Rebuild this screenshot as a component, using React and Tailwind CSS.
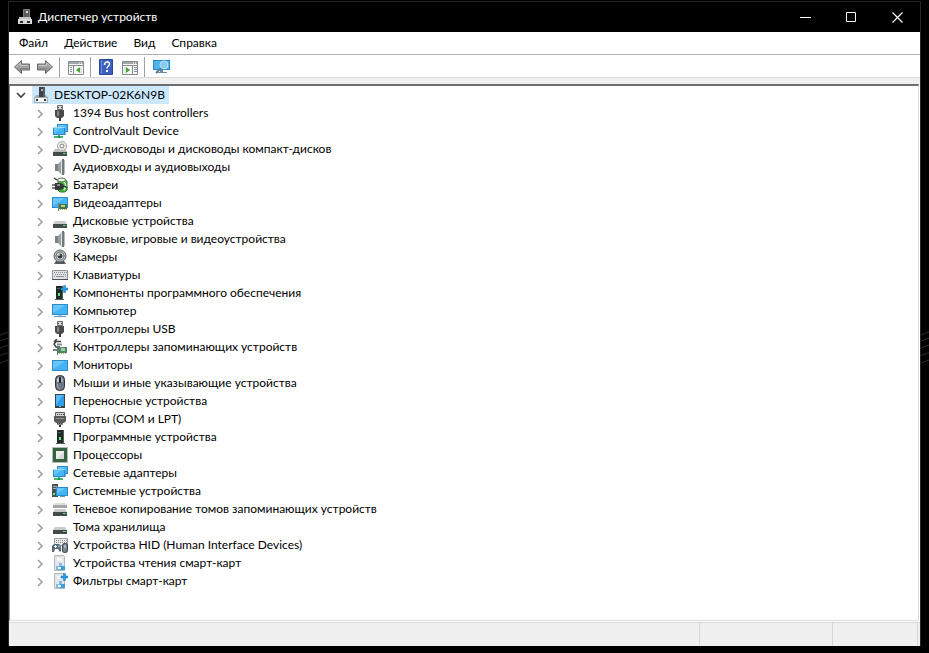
import React, { useState } from "react";

const Icon = ({ children, className = "" }) => (
  <svg
    viewBox="0 0 16 16"
    className={`h-4 w-4 shrink-0 ${className}`}
    aria-hidden="true"
  >
    {children}
  </svg>
);

// Общие части значков
const Screen = ({ x, y, w, h }) => (
  <>
    <rect x={x} y={y} width={w} height={h} fill="#2a8bd0" />
    <rect x={x + 1} y={y + 1} width={w - 2} height={h - 2} fill="#45b4f4" />
    <path d={`M${x + 1} ${y + h - 2}V${y + 1}H${x + w - 3}Z`} fill="#67c6fa" />
  </>
);

const Drive = ({ y = 8 }) => (
  <>
    <path d={`M3 ${y}H13L15 ${y + 3}H1Z`} fill="#c9cbcb" />
    <rect x="1" y={y + 3} width="14" height="4" fill="#45494a" />
    <rect x="11" y={y + 4} width="3" height="1" fill="#4fe36a" />
  </>
);

const Plus = () => (
  <path
    d="M11.5 0.5h2V3H16v2h-2.5v2.5h-2V5H9V3h2.5Z"
    fill="#2b9be6"
    stroke="#1472b0"
    strokeWidth="0.5"
  />
);

const ComputerTree = () => (
  <Icon>
    <path d="M6 0h6v10H6Z" fill="#3b4248" />
    <path d="M10 0h2v10h-2Z" fill="#535c63" />
    <path d="M8 2h2v2H8Z" fill="#aab2b8" />
    <path d="M3 8h3v2h6V8h1l2 3H1Z" fill="#a9aeb1" />
    <path d="M1.5 10.5h13v5h-13Z" fill="#f2f4f5" stroke="#a3a8ab" />
    <path d="M3 12h2v2H3ZM11 12h2v2h-2Z" fill="#30363a" />
  </Icon>
);

const TitleIcon = () => (
  <Icon>
    <path d="M6.5 0.5h6v8h-6Z" fill="#5c5c5c" stroke="#7e7e7e" />
    <path d="M9 2h2v2H9Z" fill="#dedede" />
    <path d="M2 8h12v7H2Z" fill="#c4c4c4" />
    <path d="M1 10h14v5H1Z" fill="#dadada" />
    <path d="M3 12h3v2H3ZM10 12h3v2h-3Z" fill="#2c2c2c" />
  </Icon>
);

const UsbIcon = () => (
  <Icon>
    <path d="M5.5 0.5h5v4h-5Z" fill="#dcdcdc" stroke="#666" />
    <path d="M6 2h1v1H6ZM9 2h1v1H9Z" fill="#444" />
    <path d="M3 5h9v6l-2 2H5l-2-2Z" fill="#4b4b4b" />
    <path d="M5 6h2v5H5Z" fill="#858585" />
    <path d="M7 13h2v3H7Z" fill="#3a3a3a" />
  </Icon>
);

const NetworkIcon = () => (
  <Icon>
    <Screen x={5} y={1} w={11} h={8} />
    <path d="M12 9h2v3h-2Z" fill="#7fb2d4" />
    <Screen x={1} y={4} w={12} h={8} />
    <path d="M1 4h12v1H1Z" fill="#9bd8fb" />
    <path d="M6 12h2v1h3v2H2v-2h4Z" fill="#43b476" />
    <path d="M6 13h2v2H6Z" fill="#2a8a50" />
  </Icon>
);

const DvdIcon = () => (
  <Icon>
    <circle cx="10" cy="5" r="4.5" fill="#ececec" stroke="#a6a6a6" />
    <circle cx="10" cy="5" r="2" fill="#d2d2d2" stroke="#8b8b8b" />
    <circle cx="10" cy="5" r="1" fill="#fff" />
    <path d="M3 8h3l2 1.5h4L13 8l2 3H1Z" fill="#b9bbbb" />
    <path d="M1 11h14v4H1Z" fill="#45494a" />
    <path d="M11 12h3v1h-3Z" fill="#4fe36a" />
  </Icon>
);

const SpeakerIcon = () => (
  <Icon>
    <path d="M3 5h3v7H3Z" fill="#7b8185" />
    <path d="M6 5l4-4v15l-4-4Z" fill="#9ba0a3" />
    <path d="M9 2l1-1v15l-1-1Z" fill="#e2e4e5" />
    <path d="M10 0h2v16h-2Z" fill="#74797c" />
    <path d="M12 1h1v14h-1Z" fill="#b7bbbd" />
  </Icon>
);

const BatteryIcon = () => (
  <Icon>
    <path d="M6 3h8l1 2v8l-2 2H8l-2-2Z" fill="#45b53e" stroke="#2a7a2c" />
    <ellipse cx="9.5" cy="3" rx="4" ry="2" fill="#e9f5e5" stroke="#4e6a4c" />
    <path d="M2 1l3 2" stroke="#35393b" strokeWidth="1.5" />
    <path d="M12 5c2 2 2 5 0 8" stroke="#c8f2bd" strokeWidth="1.5" fill="none" />
    <path d="M3 6h4c3 0 5 1.500 5 3.500S10 13 7 13H3Z" fill="#33383a" />
    <path d="M0 8h3M0 11h3" stroke="#4b5052" strokeWidth="1.5" />
    <path d="M5 8h3" stroke="#e4e7e7" />
    <path d="M11 9c2 0 3 1 4.5 2" fill="none" stroke="#33383a" strokeWidth="1.5" />
  </Icon>
);

const DisplayAdapterIcon = () => (
  <Icon>
    <Screen x={0} y={2} w={16} h={11} />
    <path d="M7 9h8v5H7Z" fill="#3d7a50" />
    <path d="M9 10h4v2H9Z" fill="#d7c865" />
    <path d="M8 14.5h7" stroke="#c9a93d" strokeDasharray="1 1" />
    <path d="M6.5 8v8" stroke="#77827c" />
  </Icon>
);

const DiskIcon = () => (
  <Icon>
    <Drive />
  </Icon>
);

const CameraIcon = () => (
  <Icon>
    <path d="M4 12h8l2 3H2Z" fill="#55595c" />
    <circle cx="8" cy="7" r="6" fill="#b4b8ba" stroke="#5d6163" />
    <circle cx="8" cy="7" r="4" fill="#eceeee" stroke="#75797b" />
    <circle cx="8" cy="7" r="2.5" fill="#33383b" />
    <circle cx="7" cy="6" r="1" fill="#d3dde2" />
  </Icon>
);

const KeyboardIcon = () => (
  <Icon>
    <path d="M0.5 3.5h15v9H0.5Z" fill="#dfe2e3" stroke="#8f9497" />
    <path d="M2 5.5h13M3 7.5h11" stroke="#8b9093" strokeDasharray="1 1" />
    <path d="M2 9.5h1M4 9.5h8M13 9.5h1" stroke="#8b9093" />
    <path d="M0 12.5h16" stroke="#4f5355" />
  </Icon>
);

const Tower = ({ x }) => (
  <>
    <path d={`M${x} 1h7v13h-7Z`} fill="#202a27" />
    <path d={`M${x + 6} 1h1v13h-1Z`} fill="#4d5d57" />
    <path d={`M${x + 2} 8h2v3h-2Z`} fill="#62e878" />
    <path d={`M${x + 1} 3h3v1h-3Z`} fill="#52605b" />
    <path d={`M${x - 1} 14h9v1h-9Z`} fill="#566059" />
  </>
);

const SoftwareComponentIcon = () => (
  <Icon>
    <Tower x={4} />
    <Plus />
  </Icon>
);

const SoftwareDeviceIcon = () => (
  <Icon>
    <Tower x={5} />
  </Icon>
);

const ComputerIcon = () => (
  <Icon>
    <Screen x={0} y={1} w={16} h={11} />
    <path d="M6 12h4v1H6Z" fill="#b4c5d0" />
    <path d="M2 13h12v1H2Z" fill="#5b9cc6" />
  </Icon>
);

const MonitorIcon = () => (
  <Icon>
    <Screen x={0} y={3} w={16} h={11} />
  </Icon>
);

const StorageControllerIcon = () => (
  <Icon>
    <path
      d="M9 2.5H4L2 5l2 3h4M5 0L2 3"
      fill="none"
      stroke="#3c4244"
      strokeWidth="1.5"
    />
    <path d="M5 5.5h5" stroke="#8a9194" strokeWidth="2" />
    <path d="M6 8h9v6H6Z" fill="#4c8860" />
    <path d="M9 9h4v3H9Z" fill="#a9c8ae" />
    <path d="M5.5 7v9" stroke="#656b6d" />
    <path d="M7 14.5h7" stroke="#c4ac52" strokeDasharray="1 1" />
    <path d="M1 10h4v2H1Z" fill="#7b8285" />
  </Icon>
);

const MouseIcon = () => (
  <Icon>
    <rect x="3.5" y="0.5" width="9" height="15" rx="4" fill="#6d7783" stroke="#2f353b" />
    <path d="M5 7V4l2-2v5Z" fill="#c3cad1" />
    <path d="M11 7V4L9 2v5Z" fill="#a3adb8" />
    <rect x="7" y="2" width="2" height="6" rx="1" fill="#1b1f23" />
    <path d="M5.5 9c0 3 1 4 2.5 5" fill="none" stroke="#9faab4" />
  </Icon>
);

const PortableIcon = () => (
  <Icon>
    <path d="M3 1h10v14H3Z" fill="#3a4249" />
    <path d="M4 2h8v11H4Z" fill="#2d9ee8" />
    <path d="M4 12V2h7Z" fill="#58bbf8" />
    <path d="M7 13h2v1H7Z" fill="#a8b0b6" />
  </Icon>
);

const PortIcon = () => (
  <Icon>
    <path d="M3.5 1.5h9v4h-9Z" fill="#d4d4d4" stroke="#5c5c5c" />
    <path d="M5 3.5h7" stroke="#444" strokeDasharray="1 1" />
    <path d="M2 5h12v5l-2 2H4l-2-2Z" fill="#5a5a5a" />
    <path d="M4 7h8v1H4Z" fill="#929292" />
    <path d="M5 12h6v2H5Z" fill="#8a8a8a" />
    <path d="M5 12.5h6" stroke="#3a3a3a" strokeDasharray="1 1" />
    <path d="M7 14h2v2H7Z" fill="#333" />
  </Icon>
);

const CpuIcon = () => (
  <Icon>
    <path d="M0.5 0.5h15v15H0.5Z" fill="none" stroke="#5c7a5f" strokeDasharray="1 1" />
    <path d="M1 1h14v14H1Z" fill="#3a6043" />
    <path d="M4 4h8v8H4Z" fill="#eceee9" />
    <path d="M12 5v7H5Z" fill="#d6dad3" />
  </Icon>
);

const SystemIcon = () => (
  <Icon>
    <path d="M0 1h6v13H0Z" fill="#4a5357" />
    <path d="M1 3h4v1H1ZM1 5h4v1H1Z" fill="#a6b0b5" />
    <path d="M1 10h2v2H1Z" fill="#62e878" />
    <Screen x={4} y={4} w={12} h={9} />
    <path d="M8 13h5v1H8Z" fill="#6d99b4" />
  </Icon>
);

const ShadowCopyIcon = () => (
  <Icon>
    <path d="M3 2h10l2 2H1Z" fill="#dcdddd" />
    <path d="M1 4h14v3H1Z" fill="#a4a7a8" />
    <Drive />
  </Icon>
);

const HidIcon = () => (
  <Icon>
    <path d="M2.5 1.5h13v7h-13Z" fill="#eceeef" stroke="#9a9ea0" />
    <path d="M4 3.5h11M4 5.5h11" stroke="#7c8183" strokeDasharray="1 1" />
    <path d="M2 7h5l2 2v5l-1 1-2-3H3l-1 3H0V9Z" fill="#5a6871" />
    <path d="M2 9.5h3M3.5 8v3" stroke="#fff" />
    <circle cx="7" cy="9.5" r="1" fill="#73c8f0" />
    <rect x="10.5" y="6.5" width="5" height="9" rx="2" fill="#78838b" stroke="#394148" />
    <path d="M13 8v3" stroke="#e5e9ec" />
  </Icon>
);

const Card = () => (
  <>
    <path d="M2.5 0.5h9l1 1v14h-10Z" fill="#e3e7ea" stroke="#b1b7bb" />
    <path d="M5 3h5v3H5Z" fill="#f8f9f9" />
    <path d="M7 8h3v3H7Z" fill="#7fbfe6" />
    <path d="M4 11h4v4H4Z" fill="#7fbfe6" />
    <path d="M8 11h5v4H8Z" fill="#3d9edc" />
    <path d="M6 12h3v2H6Z" fill="#fff" />
  </>
);

const SmartCardReaderIcon = () => (
  <Icon>
    <Card />
  </Icon>
);

const SmartCardFilterIcon = () => (
  <Icon>
    <Card />
    <Plus />
  </Icon>
);

// Значки панели инструментов
const ArrowIcon = ({ flip }) => (
  <Icon className={flip ? "-scale-x-100" : ""}>
    <path d="M0.5 8l7-6.5V5h8v6h-8v3.5Z" fill="#a0a0a0" stroke="#686868" />
    <path d="M2 8l4.5-4v2.5H14" fill="none" stroke="#c6c6c6" />
    <path d="M3 9l3.5 3V9.5H14" fill="none" stroke="#858585" />
  </Icon>
);

const PaneIcon = ({ right }) => (
  <Icon>
    <path d="M0.5 2.5h15v13H0.5Z" fill="#f7f7f7" stroke="#858b90" />
    <path d="M1 4h14" stroke="#a0a7ad" strokeWidth="2" />
    <path d="M11 4h1M13 4h1" stroke="#fff" />
    <path d="M1 6.5h14" stroke="#858b90" />
    {right ? (
      <>
        <path d="M10.5 7v8" stroke="#858b90" />
        <path d="M12 8.5h3M12 10.5h3M12 12.5h3" stroke="#7f91a0" />
        <path d="M2 8h2v6H2Z" fill="#e0e5df" />
        <path d="M4 8v6l4-3Z" fill="#42a12f" />
      </>
    ) : (
      <>
        <path d="M5.5 7v8" stroke="#858b90" />
        <path d="M2 8.5h2M2 10.5h2M2 12.5h2" stroke="#7f91a0" />
        <path d="M12 8h2v6h-2Z" fill="#e0e5df" />
        <path d="M12 8v6l-4-3Z" fill="#42a12f" />
      </>
    )}
  </Icon>
);

const HelpIcon = () => (
  <Icon>
    <path d="M1.5 0.5h13v15h-13Z" fill="#3c5fc0" stroke="#2b479c" />
    <path d="M3.5 1v14" stroke="#6d8cdd" />
    <path
      d="M6.5 6c0-4 5-4 5-1 0 2-2.5 2-2.5 4.5"
      fill="none"
      stroke="#fff"
      strokeWidth="1.5"
    />
    <path d="M8 11h2v2H8Z" fill="#fff" />
  </Icon>
);

const ScanIcon = () => (
  <svg viewBox="0 0 17 16" className="h-4 w-[17px] shrink-0" aria-hidden="true">
    <path d="M0 1h17v10H0Z" fill="#2589c8" />
    <path d="M1 2h15v8H1Z" fill="#4db5ec" />
    <path d="M7 11h3v2h4v1H4v-1h3Z" fill="#718b9b" />
    <circle cx="11" cy="6" r="4" fill="#86cbf0" stroke="#bfe2f5" />
    <path d="M8 9l-5 5" stroke="#557c96" strokeWidth="2" />
  </svg>
);

const Chevron = ({ open, dark }) => (
  <svg
    viewBox="0 0 10 10"
    className={`h-[10px] w-[10px] ${dark ? "stroke-[#404040]" : "stroke-[#a0a0a0]"}`}
    fill="none"
    strokeWidth="1.6"
    aria-hidden="true"
  >
    <path d={open ? "M1 3l4 4 4-4" : "M3 1l4 4-4 4"} />
  </svg>
);

const menuItems = ["Файл", "Действие", "Вид", "Справка"];

const devices = [
  { name: "1394 Bus host controllers", icon: UsbIcon },
  { name: "ControlVault Device", icon: NetworkIcon },
  { name: "DVD-дисководы и дисководы компакт-дисков", icon: DvdIcon },
  { name: "Аудиовходы и аудиовыходы", icon: SpeakerIcon },
  { name: "Батареи", icon: BatteryIcon },
  { name: "Видеоадаптеры", icon: DisplayAdapterIcon },
  { name: "Дисковые устройства", icon: DiskIcon },
  { name: "Звуковые, игровые и видеоустройства", icon: SpeakerIcon },
  { name: "Камеры", icon: CameraIcon },
  { name: "Клавиатуры", icon: KeyboardIcon },
  { name: "Компоненты программного обеспечения", icon: SoftwareComponentIcon },
  { name: "Компьютер", icon: ComputerIcon },
  { name: "Контроллеры USB", icon: UsbIcon },
  { name: "Контроллеры запоминающих устройств", icon: StorageControllerIcon },
  { name: "Мониторы", icon: MonitorIcon },
  { name: "Мыши и иные указывающие устройства", icon: MouseIcon },
  { name: "Переносные устройства", icon: PortableIcon },
  { name: "Порты (COM и LPT)", icon: PortIcon },
  { name: "Программные устройства", icon: SoftwareDeviceIcon },
  { name: "Процессоры", icon: CpuIcon },
  { name: "Сетевые адаптеры", icon: NetworkIcon },
  { name: "Системные устройства", icon: SystemIcon },
  { name: "Теневое копирование томов запоминающих устройств", icon: ShadowCopyIcon },
  { name: "Тома хранилища", icon: DiskIcon },
  { name: "Устройства HID (Human Interface Devices)", icon: HidIcon },
  { name: "Устройства чтения смарт-карт", icon: SmartCardReaderIcon },
  { name: "Фильтры смарт-карт", icon: SmartCardFilterIcon },
];

const TitleBar = () => (
  <header className="flex h-[30px] items-center bg-black pl-2 text-white">
    <TitleIcon />
    <h1 className="ml-[5px] flex-1">Диспетчер устройств</h1>
    <button type="button" aria-label="Свернуть" className="flex h-full w-[46px] items-center justify-center">
      <svg viewBox="0 0 11 11" className="h-[11px] w-[11px]" stroke="#fff" aria-hidden="true">
        <path d="M0 5.5h11" />
      </svg>
    </button>
    <button type="button" aria-label="Развернуть" className="flex h-full w-[46px] items-center justify-center">
      <svg viewBox="0 0 11 11" className="h-[11px] w-[11px]" fill="none" stroke="#fff" aria-hidden="true">
        <path d="M0.5 0.5h9v9h-9Z" />
      </svg>
    </button>
    <button type="button" aria-label="Закрыть" className="flex h-full w-[46px] items-center justify-center">
      <svg viewBox="0 0 11 11" className="h-[11px] w-[11px]" stroke="#fff" strokeWidth="1.2" aria-hidden="true">
        <path d="M0.5 0.5l10 10M10.5 0.5l-10 10" />
      </svg>
    </button>
  </header>
);

const Separator = () => <span className="h-5 w-px bg-[#a0a0a0]" />;

const ToolBar = () => (
  <div className="flex h-[23px] items-center border-b border-[#dcdcdc] bg-white pt-px pl-[5px]">
    <button type="button" aria-label="Назад">
      <ArrowIcon />
    </button>
    <button type="button" aria-label="Вперёд" className="mr-[6px] ml-[7px]">
      <ArrowIcon flip />
    </button>
    <Separator />
    <button type="button" aria-label="Дерево консоли" className="mr-[6px] ml-2">
      <PaneIcon />
    </button>
    <Separator />
    <button type="button" aria-label="Справка" className="ml-[7px]">
      <HelpIcon />
    </button>
    <button type="button" aria-label="Панель действий" className="mr-[6px] ml-2">
      <PaneIcon right />
    </button>
    <Separator />
    <button type="button" aria-label="Обновить конфигурацию оборудования" className="ml-2">
      <ScanIcon />
    </button>
  </div>
);

const DeviceTree = () => {
  const [open, setOpen] = useState(true);

  return (
    <ul
      role="tree"
      className="mr-px flex-1 border border-t-2 border-[#dcdcdc] border-t-[#6e6e6e] border-l-[#828282] bg-white"
    >
      <li role="treeitem" aria-expanded={open}>
        <div className="flex h-[18px] items-center pl-[6px]">
          <button type="button" aria-label="Развернуть дерево" onClick={() => setOpen(!open)}>
            <Chevron open={open} dark />
          </button>
          <span className="ml-[6px] flex h-[18px] items-center gap-[5px] bg-[#cce8ff] pr-1 pl-px">
            <ComputerTree />
            DESKTOP-02K6N9B
          </span>
        </div>
        {open && (
          <ul role="group">
            {devices.map(({ name, icon: DeviceIcon }) => (
              <li key={name} role="treeitem" className="flex h-[18px] items-center pl-[25px]">
                <button type="button" aria-label={name} className="mt-[2px] mr-[7px]">
                  <Chevron />
                </button>
                <DeviceIcon />
                <span className="ml-[5px] whitespace-nowrap">{name}</span>
              </li>
            ))}
          </ul>
        )}
      </li>
    </ul>
  );
};

const StatusBar = () => (
  <footer className="mt-px flex h-6 border-t border-[#d7d7d7] bg-[#f0f0f0] pr-[2px]">
    <div className="flex-1 border-r border-[#d7d7d7]" />
    <div className="w-[133px] border-r border-[#d7d7d7]" />
    <div className="w-[85px] border-r border-[#d7d7d7]" />
  </footer>
);

// Блики обоев по краям окна
const WallpaperStreaks = ({ className }) => (
  <svg
    viewBox="0 0 8 40"
    className={`absolute top-[330px] h-10 w-2 ${className}`}
    fill="none"
    aria-hidden="true"
  >
    <path d="M0 11l8-3M0 18l8-3M0 33l8-3" stroke="#2c2c2c" />
    <path d="M0 5l8-3M0 25l8-2" stroke="#161616" strokeWidth="2" />
  </svg>
);

const App = () => (
  <div className="relative flex min-h-screen bg-black px-2 pt-px pb-[7px] font-['Lato','Noto_Sans',sans-serif] text-[12px] leading-[18px] text-black">
    <WallpaperStreaks className="left-0" />
    <WallpaperStreaks className="right-0" />
    <div className="flex min-w-0 flex-1 flex-col border-x border-t border-[#262626] bg-white">
      <TitleBar />
      <nav className="flex h-[23px] items-center gap-4 border-b border-[#b0b0b0] bg-white pl-[10px]">
        {menuItems.map((item) => (
          <button key={item} type="button">
            {item}
          </button>
        ))}
      </nav>
      <ToolBar />
      <div className="h-[6px] bg-[#f0f0f0]" />
      <DeviceTree />
      <StatusBar />
    </div>
  </div>
);

export default App;
